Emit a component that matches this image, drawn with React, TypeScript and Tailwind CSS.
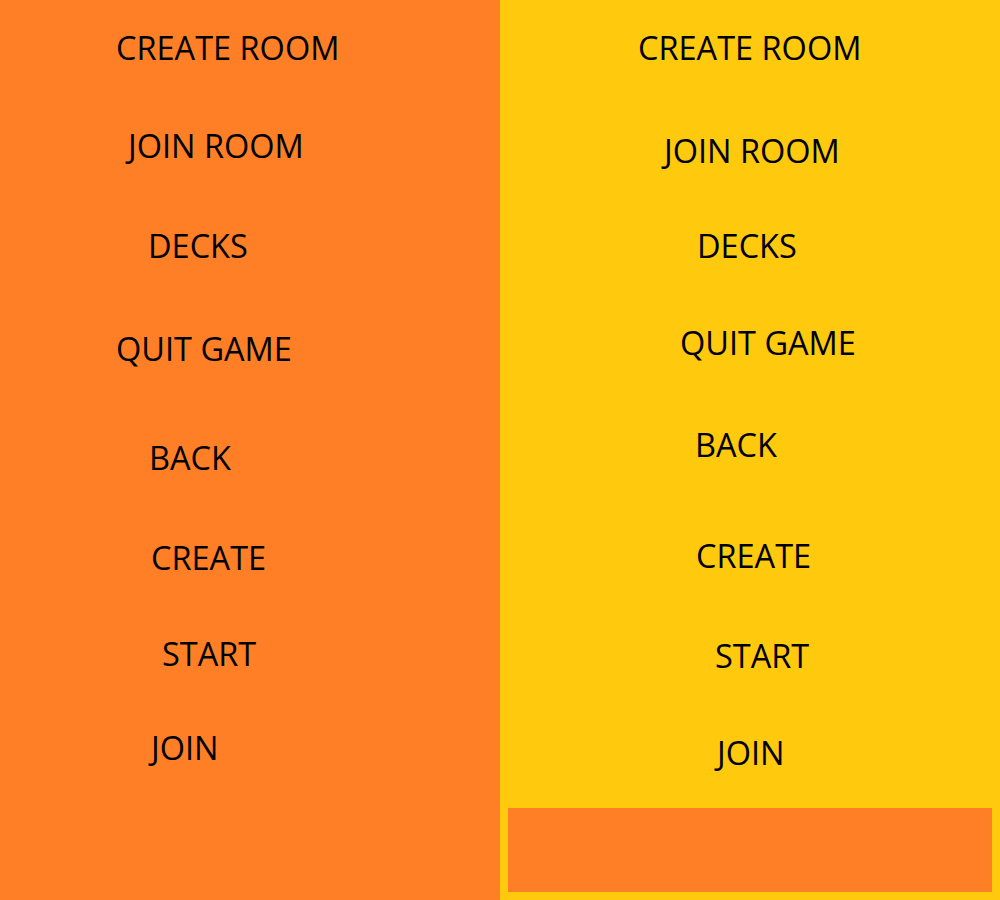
const font = { fontFamily: '"Open Sans", "Noto Sans", sans-serif' }

export default function App() {
  return (
    <div className="flex w-[1000px] h-[900px] text-black" style={font}>
      {/* Left menu */}
      <div className="flex flex-col w-[500px] h-full bg-[#ff7f27] text-[32.5px] leading-[40px] font-medium">
        <div className="mt-[28px] ml-[116px]">CREATE ROOM</div>
        <div className="mt-[58px] ml-[128px]">JOIN ROOM</div>
        <div className="mt-[60px] ml-[148px]">DECKS</div>
        <div className="mt-[63px] ml-[116px]">QUIT GAME</div>
        <div className="mt-[69px] ml-[149px]">BACK</div>
        <div className="mt-[60px] ml-[151px]">CREATE</div>
        <div className="mt-[56px] ml-[162px]">START</div>
        <div className="mt-[54px] ml-[151px]">JOIN</div>
      </div>

      {/* Right menu */}
      <div className="flex flex-col w-[500px] h-full bg-[#ffc90e] text-[32.5px] leading-[40px] font-medium">
        <div className="mt-[28px] ml-[138px]">CREATE ROOM</div>
        <div className="mt-[63px] ml-[164px]">JOIN ROOM</div>
        <div className="mt-[55px] ml-[197px]">DECKS</div>
        <div className="mt-[57px] ml-[180px]">QUIT GAME</div>
        <div className="mt-[62px] ml-[195px]">BACK</div>
        <div className="mt-[71px] ml-[196px]">CREATE</div>
        <div className="mt-[60px] ml-[215px]">START</div>
        <div className="mt-[57px] ml-[217px]">JOIN</div>
        <div className="mt-auto mb-[8px] mx-[8px] h-[84px] bg-[#ff7f27]" />
      </div>
    </div>
  )
}
